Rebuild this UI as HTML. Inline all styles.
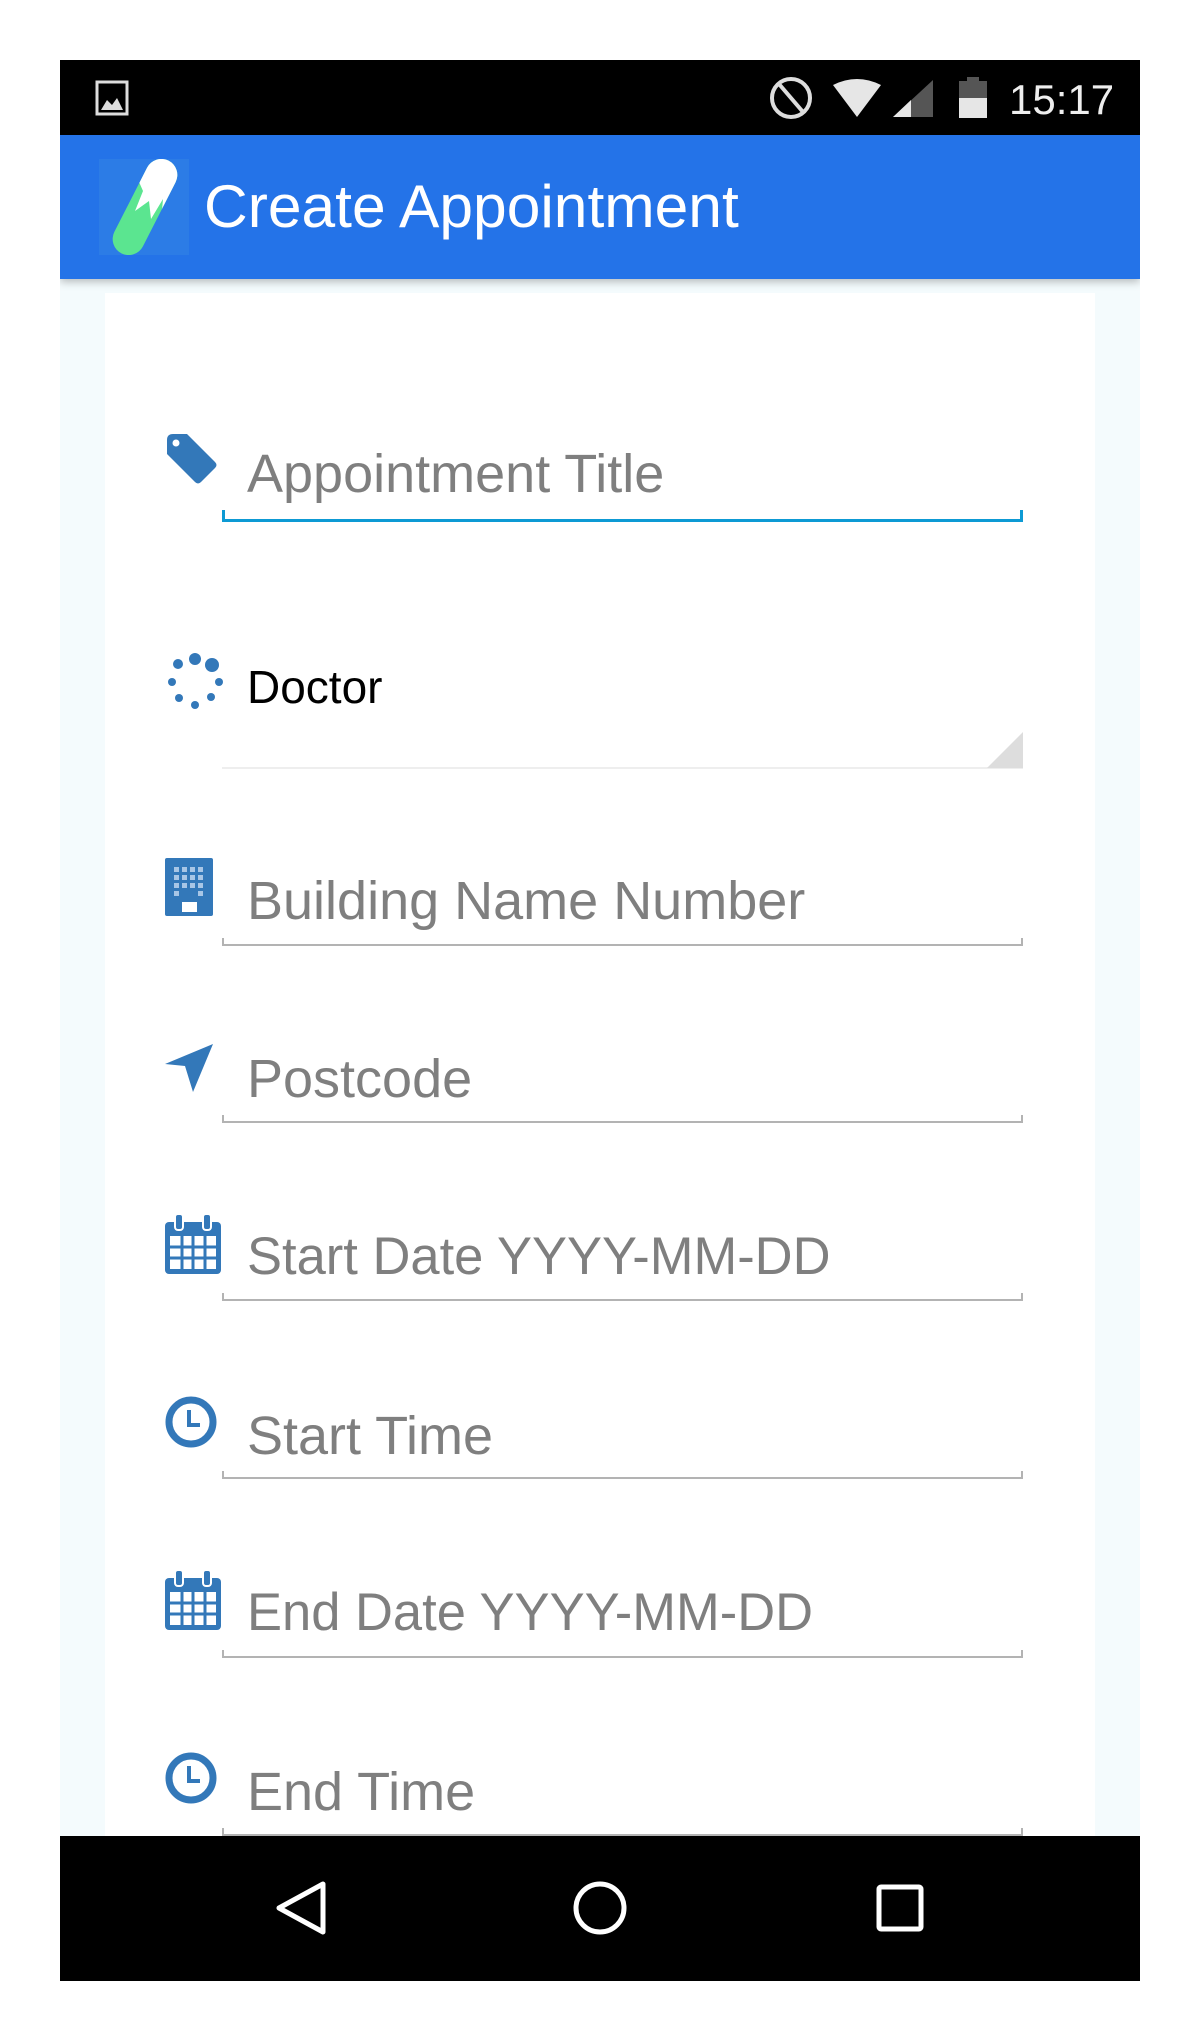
<!DOCTYPE html>
<html><head><meta charset="utf-8"><style>
body{margin:0;width:1200px;height:2040px;background:#fff;position:relative;overflow:hidden;font-family:"Liberation Sans",sans-serif}
.abs{position:absolute}
.lbl{position:absolute;left:247px;font-size:54px;color:#7f7f7f;white-space:nowrap;line-height:1}
.ul{position:absolute;left:222px;width:801px;height:8px;border:2px solid #b3b3b3;border-top:none;box-sizing:border-box}
</style></head><body>
<div class="abs" style="left:60px;top:60px;width:1080px;height:1921px;background:#f4fbfd;overflow:hidden">
 <div class="abs" style="left:0;top:0;width:1080px;height:75px;background:#000"></div>
 <div class="abs" style="left:0;top:75px;width:1080px;height:144px;background:#2473e8;box-shadow:0 3px 8px rgba(0,0,0,.25)"></div>
 <div class="abs" style="left:45px;top:233px;width:990px;height:1600px;background:#fff"></div>
</div>
<!-- status bar -->
<svg class="abs" style="left:95px;top:80px" width="40" height="36"><rect x="2" y="2" width="30" height="32" fill="none" stroke="#ddd" stroke-width="3"/><path d="M6 30 L12 20 L17 25 L22 18 L28 30Z" fill="#ddd"/></svg>
<svg class="abs" style="left:768px;top:75px" width="340" height="50">
 <circle cx="23" cy="23" r="19" fill="none" stroke="#ddd" stroke-width="4"/><line x1="11" y1="9" x2="35" y2="37" stroke="#ddd" stroke-width="4"/>
 <path d="M65 10 Q89 -2 113 10 L89 42Z" fill="#e6e6e6"/>
 <path d="M125 42 L165 5 L165 42Z" fill="#555"/><path d="M125 42 L143 25 L143 42Z" fill="#e6e6e6"/>
 <rect x="199" y="2" width="12" height="6" fill="#555"/><rect x="191" y="6" width="28" height="37" fill="#555"/><rect x="191" y="23" width="28" height="20" fill="#e6e6e6"/>
</svg>
<div class="abs" style="left:1009px;top:76px;font-size:42px;color:#eee;line-height:48px">15:17</div>
<!-- toolbar -->
<svg class="abs" style="left:99px;top:159px" width="90" height="96">
 <rect x="0" y="0" width="90" height="96" fill="#2c7ce6"/>
 <defs><clipPath id="pc"><rect x="30" y="-4" width="32" height="104" rx="16" transform="rotate(27 46 48)"/></clipPath></defs>
 <g clip-path="url(#pc)">
  <rect x="0" y="0" width="90" height="96" fill="#5be590"/>
  <path d="M30 0 L90 0 L90 30 L62 62 L64 40 L52 60 L50 42 L36 52 L44 32Z" fill="#fff"/>
 </g>
</svg>
<div class="abs" style="left:204px;top:173px;font-size:60.5px;color:#fff;line-height:66px">Create Appointment</div>
<!-- fields -->
<svg class="abs" style="left:163px;top:432px" width="60" height="60"><path d="M4 8 Q4 2 10 2 L24 2 L52 30 Q55 33 52 36 L38 50 Q35 53 32 50 L4 22Z" fill="#3378b9"/><circle cx="13" cy="11" r="3.5" fill="#fff"/></svg>
<div class="lbl" style="top:447px">Appointment Title</div>
<div class="ul" style="top:510px;border-color:#0d9ad4;border-width:3px;height:12px"></div>

<svg class="abs" style="left:165px;top:652px" width="62" height="62"><g fill="#3378b9"><circle cx="30" cy="7" r="6"/><circle cx="47" cy="13" r="7"/><circle cx="13" cy="12" r="5"/><circle cx="54" cy="30" r="4"/><circle cx="7" cy="30" r="4"/><circle cx="46" cy="45" r="4"/><circle cx="14" cy="46" r="4"/><circle cx="30" cy="53" r="4"/></g></svg>
<div class="lbl" style="top:664px;font-size:46px;color:#000">Doctor</div>
<div class="abs" style="left:222px;top:767px;width:801px;height:2px;background:#eee"></div>
<svg class="abs" style="left:987px;top:732px" width="36" height="36"><path d="M36 0 L36 36 L0 36Z" fill="#ddd"/></svg>

<svg class="abs" style="left:165px;top:858px" width="50" height="62"><rect x="0" y="0" width="48" height="58" rx="2" fill="#3378b9"/><g fill="#a8c6e6"><rect x="9" y="9" width="5" height="5"/><rect x="17" y="9" width="5" height="5"/><rect x="25" y="9" width="5" height="5"/><rect x="33" y="9" width="5" height="5"/><rect x="9" y="17" width="5" height="5"/><rect x="17" y="17" width="5" height="5"/><rect x="25" y="17" width="5" height="5"/><rect x="33" y="17" width="5" height="5"/><rect x="9" y="25" width="5" height="5"/><rect x="17" y="25" width="5" height="5"/><rect x="25" y="25" width="5" height="5"/><rect x="33" y="25" width="5" height="5"/><rect x="9" y="33" width="5" height="5"/><rect x="33" y="33" width="5" height="5"/></g><rect x="17" y="44" width="15" height="10" fill="#fff"/></svg>
<div class="lbl" style="top:874px">Building Name Number</div>
<div class="ul" style="top:938px"></div>

<svg class="abs" style="left:165px;top:1044px" width="50" height="50"><path d="M48 0 L0 20 L20 22 L28 48Z" fill="#3378b9"/></svg>
<div class="lbl" style="top:1052px">Postcode</div>
<div class="ul" style="top:1115px"></div>

<svg class="abs" style="left:165px;top:1214px" width="58" height="62"><rect x="0" y="8" width="56" height="52" rx="4" fill="#3378b9"/><rect x="10" y="0" width="8" height="16" rx="3" fill="#3378b9" stroke="#fff" stroke-width="2"/><rect x="38" y="0" width="8" height="16" rx="3" fill="#3378b9" stroke="#fff" stroke-width="2"/><rect x="5" y="22" width="46" height="33" fill="#fff"/><g stroke="#3378b9" stroke-width="3"><line x1="17" y1="22" x2="17" y2="55"/><line x1="28" y1="22" x2="28" y2="55"/><line x1="40" y1="22" x2="40" y2="55"/><line x1="5" y1="33" x2="51" y2="33"/><line x1="5" y1="44" x2="51" y2="44"/></g></svg>
<div class="lbl" style="top:1231px;font-size:52.5px">Start Date YYYY-MM-DD</div>
<div class="ul" style="top:1293px"></div>

<svg class="abs" style="left:165px;top:1396px" width="56" height="56"><circle cx="26" cy="26" r="22" fill="none" stroke="#3378b9" stroke-width="7"/><path d="M24 14 L24 29 L35 29" fill="none" stroke="#3378b9" stroke-width="4"/></svg>
<div class="lbl" style="top:1409px">Start Time</div>
<div class="ul" style="top:1471px"></div>

<svg class="abs" style="left:165px;top:1570px" width="58" height="62"><rect x="0" y="8" width="56" height="52" rx="4" fill="#3378b9"/><rect x="10" y="0" width="8" height="16" rx="3" fill="#3378b9" stroke="#fff" stroke-width="2"/><rect x="38" y="0" width="8" height="16" rx="3" fill="#3378b9" stroke="#fff" stroke-width="2"/><rect x="5" y="22" width="46" height="33" fill="#fff"/><g stroke="#3378b9" stroke-width="3"><line x1="17" y1="22" x2="17" y2="55"/><line x1="28" y1="22" x2="28" y2="55"/><line x1="40" y1="22" x2="40" y2="55"/><line x1="5" y1="33" x2="51" y2="33"/><line x1="5" y1="44" x2="51" y2="44"/></g></svg>
<div class="lbl" style="top:1587px;font-size:52.5px">End Date YYYY-MM-DD</div>
<div class="ul" style="top:1650px"></div>

<svg class="abs" style="left:165px;top:1752px" width="56" height="56"><circle cx="26" cy="26" r="22" fill="none" stroke="#3378b9" stroke-width="7"/><path d="M24 14 L24 29 L35 29" fill="none" stroke="#3378b9" stroke-width="4"/></svg>
<div class="lbl" style="top:1765px">End Time</div>
<div class="ul" style="top:1828px"></div>
<!-- nav bar -->
<div class="abs" style="left:60px;top:1836px;width:1080px;height:145px;background:#000"></div>
<svg class="abs" style="left:270px;top:1876px" width="660" height="64">
 <path d="M53 8 L53 56 L9 32Z" fill="none" stroke="#fff" stroke-width="5" stroke-linejoin="round"/>
 <circle cx="330" cy="32" r="24" fill="none" stroke="#fff" stroke-width="5"/>
 <rect x="609" y="11" width="42" height="42" rx="2" fill="none" stroke="#fff" stroke-width="5"/>
</svg>
</body></html>
